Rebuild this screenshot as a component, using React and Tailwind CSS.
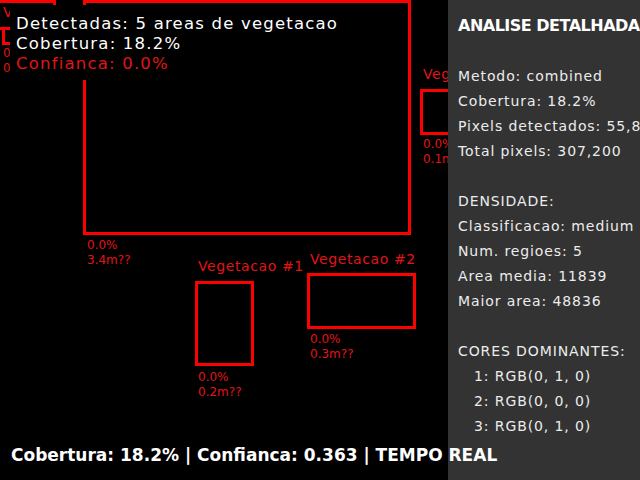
import React from "react";

const Label = ({ className = "", children }) => (
  <div className={`text-[14px] leading-none tracking-[0.6px] text-[#e01515] whitespace-nowrap ${className}`}>
    {children}
  </div>
);

const Stats = ({ className = "", a, b }) => (
  <div className={`flex flex-col text-[12px] leading-[15px] text-[#e01515] whitespace-nowrap ${className}`}>
    <span>{a}</span>
    <span>{b}</span>
  </div>
);

const Detection = ({ pos, label, boxClass, gapTop, gapBottom, a, b }) => (
  <div className={`absolute flex flex-col items-start ${pos}`}>
    {label && <Label className="ml-[3px]">{label}</Label>}
    <div className={`border-[3px] border-[#ff0000] ${gapTop} ${boxClass}`} />
    <Stats className={`ml-[3px] ${gapBottom}`} a={a} b={b} />
  </div>
);

export default function App() {
  const lines1 = [
    "Metodo: combined",
    "Cobertura: 18.2%",
    "Pixels detectados: 55,810",
    "Total pixels: 307,200",
  ];
  const lines2 = [
    "DENSIDADE:",
    "Classificacao: medium",
    "Num. regioes: 5",
    "Area media: 11839",
    "Maior area: 48836",
  ];
  const colors = ["1: RGB(0, 1, 0)", "2: RGB(0, 0, 0)", "3: RGB(0, 1, 0)"];
  return (
    <div className="relative w-[640px] h-[480px] bg-black overflow-hidden flex font-['DejaVu_Sans',sans-serif]">
      {/* canvas area */}
      <div className="relative w-[448px] h-full overflow-hidden">
        <div className="absolute left-[-10px] top-0 w-[66px] h-[30px] border-[3px] border-[#ff0000]" />
        <div className="absolute left-[0px] top-[5px] flex flex-col items-start">
          <Label className="ml-[3px]">Vegetacao #5</Label>
          <div className="mt-[8px] ml-[2px] w-[40px] h-[18px] border-[3px] border-[#ff0000]" />
          <Stats className="ml-[3px] mt-[1px]" a="0.0%" b="0.1m??" />
        </div>

        <Detection
          pos="left-[83px] top-0"
          boxClass="w-[328px] h-[235px]"
          gapTop=""
          gapBottom="ml-[4px] mt-[3px]"
          a="0.0%"
          b="3.4m??"
        />
        <Detection
          pos="left-[420px] top-[67px]"
          label="Vegetacao #3"
          boxClass="w-[60px] h-[46px]"
          gapTop="mt-[8px]"
          gapBottom="mt-[2px]"
          a="0.0%"
          b="0.1m??"
        />
        <Detection
          pos="left-[195px] top-[259px]"
          label="Vegetacao #1"
          boxClass="w-[59px] h-[85px]"
          gapTop="mt-[8px]"
          gapBottom="mt-[4px]"
          a="0.0%"
          b="0.2m??"
        />
        <Detection
          pos="left-[307px] top-[252px]"
          label="Vegetacao #2"
          boxClass="w-[109px] h-[56px]"
          gapTop="mt-[7px]"
          gapBottom="mt-[3px]"
          a="0.0%"
          b="0.3m??"
        />

        {/* info overlay */}
        <div className="absolute left-[10px] top-[5px] w-[340px] h-[75px] bg-black pt-[9px] pl-[6px] flex flex-col text-[16.5px] leading-[20px] tracking-[1.2px] whitespace-nowrap">
          <span className="text-white">Detectadas: 5 areas de vegetacao</span>
          <span className="text-white">Cobertura: 18.2%</span>
          <span className="text-[#e01515]">Confianca: 0.0%</span>
        </div>
      </div>

      {/* right panel */}
      <div className="w-[192px] h-full bg-[#333333] pl-[10px] pt-[18px] flex flex-col whitespace-nowrap overflow-hidden">
        <div className="text-[16px] leading-none font-bold tracking-[-0.5px] text-white">ANALISE DETALHADA</div>
        <div className="mt-[30px] flex flex-col text-[14px] leading-[25px] tracking-[0.9px] text-[#ececec]">
          {lines1.map((t) => (
            <span key={t}>{t}</span>
          ))}
          <span className="h-[25px]" />
          {lines2.map((t) => (
            <span key={t}>{t}</span>
          ))}
          <span className="h-[25px]" />
          <span>CORES DOMINANTES:</span>
          {colors.map((t) => (
            <span key={t} className="pl-[16px]">{t}</span>
          ))}
        </div>
      </div>

      {/* bottom status */}
      <div className="absolute left-[11px] top-[447px] text-[17px] leading-none font-bold text-white whitespace-nowrap">
        Cobertura: 18.2% | Confianca: 0.363 | TEMPO REAL
      </div>
    </div>
  );
}
